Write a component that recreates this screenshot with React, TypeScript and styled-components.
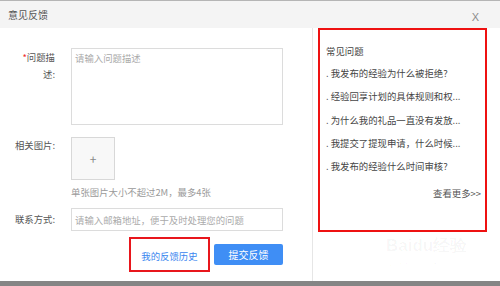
import { FC } from 'react'
import styled, { createGlobalStyle } from 'styled-components'

const GlobalStyle = createGlobalStyle`
	html, body {
		margin: 0;
		padding: 0;
		background: #fff;
	}
	body {
		font-family: 'Noto Sans CJK SC', 'Noto Sans', 'Liberation Sans', sans-serif;
		font-size: 9.4px;
		color: #444;
	}
`

const Dialog = styled.div`
	position: relative;
	width: 500px;
	height: 286px;
	display: flex;
	flex-direction: column;
	overflow: hidden;
	background: #fff;
`

const Header = styled.div`
	height: 27px;
	flex: none;
	border-top: 1px solid #b5b5b5;
	background: #f4f4f4;
	display: flex;
	align-items: center;
	justify-content: space-between;
	padding: 0 21px 0 8px;
`

const Title = styled.div`
	font-size: 10px;
	color: #555;
	line-height: 14px;
`

const Close = styled.div`
	font-family: 'Liberation Sans', sans-serif;
	font-size: 11px;
	color: #8c8c8c;
	margin-top: 5px;
`

const Body = styled.div`
	flex: 1;
	display: flex;
`

const Form = styled.div`
	width: 313px;
	flex: none;
	border-right: 1px solid #e6e6e6;
	padding: 20px 29px 0 0;
	box-sizing: border-box;
	display: flex;
	flex-direction: column;
`

const Row = styled.div<{ $mt?: number }>`
	display: flex;
	align-items: flex-start;
	gap: 15px;
	margin-top: ${p => p.$mt ?? 0}px;
`

const Label = styled.div<{ $top?: number }>`
	width: 55px;
	flex: none;
	text-align: right;
	line-height: 17px;
	color: #555;
	padding-top: ${p => p.$top ?? 0}px;
	padding-right: 1px;

	span {
		color: #e33;
	}
`

const Field = styled.div`
	flex: 1;
	display: flex;
	flex-direction: column;
`

const TextArea = styled.div`
	height: 77px;
	border: 1px solid #dcdcdc;
	box-sizing: border-box;
	padding: 2px 3px;
	color: #aaa;
	line-height: 14px;
`

const Upload = styled.div`
	width: 44px;
	height: 43px;
	border: 1px solid #d8d8d8;
	box-sizing: border-box;
	background: #f8f8f8;
	display: flex;
	align-items: center;
	justify-content: center;
	color: #888;
	font-size: 12px;
`

const Hint = styled.div`
	margin-top: 5px;
	color: #9a9a9a;
	line-height: 14px;
`

const Input = styled.div`
	height: 23px;
	border: 1px solid #dcdcdc;
	box-sizing: border-box;
	padding: 0 3px;
	display: flex;
	align-items: center;
	color: #aaa;
`

const Actions = styled.div`
	display: flex;
	justify-content: flex-end;
	align-items: center;
	gap: 4px;
	margin-top: 6px;
`

const HistoryLink = styled.div`
	width: 81px;
	height: 35px;
	box-sizing: border-box;
	border: 2px solid #e8161c;
	display: flex;
	align-items: center;
	justify-content: center;
	color: #3a86ef;
	padding-top: 2px;
`

const SubmitButton = styled.div`
	width: 69px;
	height: 21px;
	border-radius: 2px;
	background: #3f8ef5;
	color: #fff;
	font-size: 10px;
	display: flex;
	align-items: center;
	justify-content: center;
`

const Side = styled.div`
	flex: 1;
	padding-left: 5px;
	padding-right: 13px;
`

const FaqBox = styled.div`
	height: 204px;
	box-sizing: border-box;
	border: 2px solid #ee1111;
	padding: 14px 2px 0 6px;
	display: flex;
	flex-direction: column;
`

const FaqTitle = styled.div`
	line-height: 14px;
	color: #444;
	margin-bottom: 8px;
`

const FaqItem = styled.div`
	line-height: 14px;
	height: 23.3px;
	color: #444;
	white-space: nowrap;
`

const More = styled.div`
	margin-top: 4px;
	text-align: right;
	line-height: 14px;
	padding-right: 2px;
	color: #555;
`

const Watermark = styled.div`
	position: absolute;
	left: 386px;
	top: 236px;
	display: flex;
	flex-direction: column;
	align-items: center;
	color: rgba(0, 0, 0, 0.035);
	font-family: 'Liberation Sans', sans-serif;
	pointer-events: none;

	b {
		font-size: 17px;
		line-height: 20px;
	}

	small {
		font-size: 9px;
		line-height: 11px;
	}
`

const BottomBar = styled.div`
	height: 5px;
	flex: none;
	background: #858585;
`

const faqs = [
	'我发布的经验为什么被拒绝?',
	'经验回享计划的具体规则和权...',
	'为什么我的礼品一直没有发放...',
	'我提交了提现申请，什么时候...',
	'我发布的经验什么时间审核?',
]

const App: FC = () => {
	return (
		<Dialog>
			<GlobalStyle />
			<Header>
				<Title>意见反馈</Title>
				<Close>X</Close>
			</Header>
			<Body>
				<Form>
					<Row>
						<Label $top={1}>
							<span>*</span>问题描
							<br />
							述:
						</Label>
						<Field>
							<TextArea>请输入问题描述</TextArea>
						</Field>
					</Row>
					<Row $mt={12}>
						<Label>相关图片:</Label>
						<Field>
							<Upload>+</Upload>
							<Hint>单张图片大小不超过2M，最多4张</Hint>
						</Field>
					</Row>
					<Row $mt={9}>
						<Label $top={3}>联系方式:</Label>
						<Field>
							<Input>请输入邮箱地址，便于及时处理您的问题</Input>
						</Field>
					</Row>
					<Actions>
						<HistoryLink>我的反馈历史</HistoryLink>
						<SubmitButton>提交反馈</SubmitButton>
					</Actions>
				</Form>
				<Side>
					<FaqBox>
						<FaqTitle>常见问题</FaqTitle>
						{faqs.map((q, i) => (
							<FaqItem key={i}>. {q}</FaqItem>
						))}
						<More>查看更多&gt;&gt;</More>
					</FaqBox>
				</Side>
			</Body>
			<BottomBar />
			<Watermark>
				<b>Baidu经验</b>
				<small>jingyan.baidu.com</small>
			</Watermark>
		</Dialog>
	)
}

export default App
